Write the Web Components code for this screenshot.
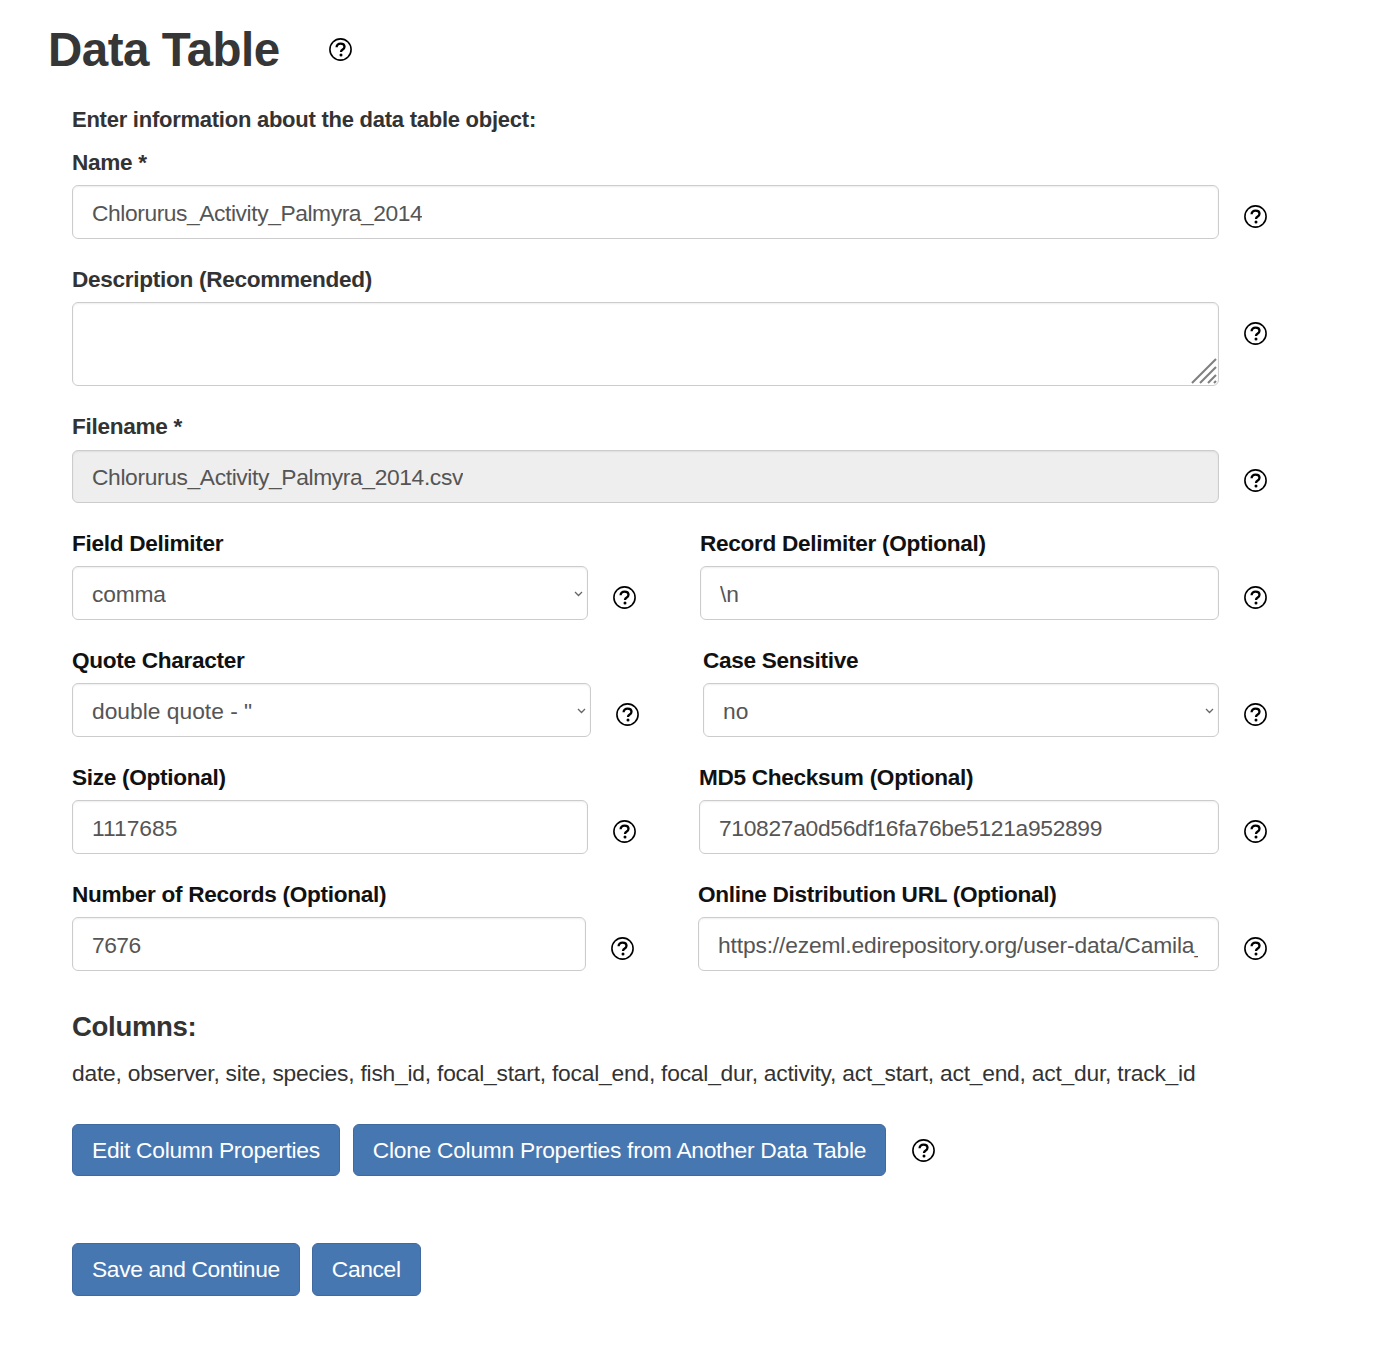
<!doctype html>
<html>
<head>
<meta charset="utf-8">
<title>Data Table</title>
<style>
  html, body { margin: 0; background: #fff; }
  body { font-family: "Liberation Sans", Arial, sans-serif; color: #333; }
</style>
</head>
<body>
<data-table-page>
  <form-row>
    <form-field label="Name *" value="Chlorurus_Activity_Palmyra_2014" tone="soft" spacing="-0.42"></form-field>
  </form-row>
  <form-row>
    <form-field label="Description (Recommended)" kind="textarea" tone="soft"></form-field>
  </form-row>
  <form-row>
    <form-field label="Filename *" value="Chlorurus_Activity_Palmyra_2014.csv" kind="disabled" tone="soft" spacing="-0.37"></form-field>
  </form-row>
  <form-row left="516">
    <form-field label="Field Delimiter" value="comma" kind="select" spacing="-0.2"></form-field>
    <form-field label="Record Delimiter (Optional)" value="\n"></form-field>
  </form-row>
  <form-row left="519">
    <form-field label="Quote Character" value="double quote - &quot;" kind="select"></form-field>
    <form-field label="Case Sensitive" value="no" kind="select"></form-field>
  </form-row>
  <form-row left="516" gap="63">
    <form-field label="Size (Optional)" value="1117685"></form-field>
    <form-field label="MD5 Checksum (Optional)" value="710827a0d56df16fa76be5121a952899" spacing="-0.31"></form-field>
  </form-row>
  <form-row left="514">
    <form-field label="Number of Records (Optional)" value="7676" spacing="-0.5"></form-field>
    <form-field label="Online Distribution URL (Optional)" value="https://ezeml.edirepository.org/user-data/Camila_" spacing="-0.15"></form-field>
  </form-row>
  <column-list>date, observer, site, species, fish_id, focal_start, focal_end, focal_dur, activity, act_start, act_end, act_dur, track_id</column-list>
</data-table-page>

<script>
const helpSvg = `<svg viewBox="0 0 23 23" width="23" height="23" fill="none" aria-hidden="true">
  <circle cx="11.5" cy="11.5" r="10.6" stroke="#000" stroke-width="1.6"/>
  <path d="M7.6 9.2c0-2.3 1.6-3.6 4-3.6 2.3 0 3.9 1.3 3.9 3.1 0 1.4-.8 2.1-1.8 2.8-1.2.8-1.7 1.2-1.7 2.4" stroke="#000" stroke-width="2.3"/>
  <circle cx="12" cy="16.9" r="1.5" fill="#000"/>
</svg>`;

class HelpIcon extends HTMLElement {
  constructor() {
    super();
    this.attachShadow({ mode: "open" }).innerHTML = `
      <style>
        :host { display: block; width: 23px; height: 23px; flex-shrink: 0; }
        svg { display: block; }
      </style>
      ${helpSvg}`;
  }
}
customElements.define("help-icon", HelpIcon);

class FormField extends HTMLElement {
  constructor() {
    super();
    const kind = this.getAttribute("kind") || "input";
    const tone = this.getAttribute("tone");
    const spacing = this.getAttribute("spacing") || "0";
    const root = this.attachShadow({ mode: "open" });
    root.innerHTML = `
      <style>
        :host { display: flex; flex-direction: column; flex: 1; min-width: 0; }
        .label {
          font-size: 22.6px; font-weight: 700; line-height: 28px; height: 26px;
          letter-spacing: -0.3px; margin-bottom: 10px; white-space: nowrap;
          color: ${tone === "soft" ? "#333" : "#111"};
        }
        .row { display: flex; align-items: flex-start; gap: 25px; }
        .control {
          flex: 1; min-width: 0; box-sizing: border-box; height: 54px; position: relative;
          display: flex; align-items: center;
          padding: 2px 20px 0 19px; border: 1px solid #ccc; border-radius: 6px;
          font-size: 22.8px; letter-spacing: ${spacing}px; color: #555; background: #fff; white-space: nowrap;
          box-shadow: inset 0 1px 2px rgba(0,0,0,.07);
        }
        /* long values get clipped by the box padding like a real input */
        .value { min-width: 0; overflow: hidden; line-height: 30px; }
        .disabled { background: #eee; height: 53px; margin-top: 1px; padding-top: 0; }
        .textarea { height: 84px; }
        svg.chev { position: absolute; right: 4px; top: 24px; }
        svg.grip { position: absolute; right: 1px; bottom: 1px; }
        help-icon { margin-top: 20px; }
      </style>
      <div class="label"></div>
      <div class="row">
        <div class="control ${kind}">
          <span class="value"></span>
          ${kind === "select" ? `<svg class="chev" width="9" height="6" viewBox="0 0 9 6" fill="none"><path d="M1 1l3.5 3.5L8 1" stroke="#666" stroke-width="1.3"/></svg>` : ""}
          ${kind === "textarea" ? `<svg class="grip" width="26" height="26" viewBox="0 0 26 26" fill="none" stroke="#808080" stroke-width="2.1"><path d="M1 25L25 1M9 25L25 9M17 25l8-8M23 25l2-2"/></svg>` : ""}
        </div>
        <help-icon></help-icon>
      </div>`;
    root.querySelector(".label").textContent = this.getAttribute("label");
    root.querySelector(".value").textContent = this.getAttribute("value") || "";
  }
}
customElements.define("form-field", FormField);

class FormRow extends HTMLElement {
  constructor() {
    super();
    const left = this.getAttribute("left");
    const gap = this.getAttribute("gap") || "64";
    this.attachShadow({ mode: "open" }).innerHTML = `
      <style>
        :host { display: flex; gap: ${gap}px; margin-bottom: 27px; }
        ::slotted(form-field:first-child) { ${left ? `flex: 0 0 ${+left + 48}px;` : ""} }
      </style>
      <slot></slot>`;
  }
}
customElements.define("form-row", FormRow);

class ActionButton extends HTMLElement {
  constructor() {
    super();
    this.attachShadow({ mode: "open" }).innerHTML = `
      <style>
        :host {
          display: inline-flex; align-items: center; box-sizing: border-box;
          padding: 0 19px; background: #4777b1; border: 1px solid #40699f; border-radius: 6px;
          color: #fff; font-size: 22.8px; letter-spacing: -0.3px; white-space: nowrap;
        }
      </style>
      <slot></slot>`;
  }
}
customElements.define("action-button", ActionButton);

class ColumnList extends HTMLElement {
  constructor() {
    super();
    this.attachShadow({ mode: "open" }).innerHTML = `
      <style>
        :host { display: block; margin-top: 40px; }
        h2 { margin: 0 0 14px; font-size: 27.6px; line-height: 32px; font-weight: 700; letter-spacing: -0.35px; color: #333; }
        .names { font-size: 22.8px; line-height: 32px; letter-spacing: -0.22px; color: #333; white-space: nowrap; }
        .actions { display: flex; align-items: center; margin-top: 35px; height: 52px; }
        .actions action-button { height: 52px; }
        .actions help-icon { margin-left: 26px; }
        .actions action-button + action-button { margin-left: 13px; letter-spacing: -0.28px; }
        .final { display: flex; gap: 12px; margin-top: 67px; height: 53px; }
        .final action-button { letter-spacing: -0.36px; }
      </style>
      <h2>Columns:</h2>
      <div class="names"><slot></slot></div>
      <div class="actions">
        <action-button>Edit Column Properties</action-button>
        <action-button>Clone Column Properties from Another Data Table</action-button>
        <help-icon></help-icon>
      </div>
      <div class="final">
        <action-button>Save and Continue</action-button>
        <action-button>Cancel</action-button>
      </div>`;
  }
}
customElements.define("column-list", ColumnList);

class DataTablePage extends HTMLElement {
  constructor() {
    super();
    this.attachShadow({ mode: "open" }).innerHTML = `
      <style>
        :host { display: block; height: 1358px; box-sizing: border-box; padding: 0 117px 0 48px; }
        header { display: flex; align-items: center; height: 100px; gap: 49px; }
        header help-icon { margin-top: -2px; }
        h1 { margin: 0; font-size: 47.5px; font-weight: 700; letter-spacing: -0.5px; color: #363636; line-height: 100px; }
        .body { padding-left: 24px; }
        .intro { font-size: 22px; font-weight: 700; line-height: 28px; height: 26px; letter-spacing: -0.25px; color: #333; margin: 6px 0 17px; }
      </style>
      <header><h1>Data Table</h1><help-icon></help-icon></header>
      <div class="body">
        <div class="intro">Enter information about the data table object:</div>
        <slot></slot>
      </div>`;
  }
}
customElements.define("data-table-page", DataTablePage);
</script>
</body>
</html>
